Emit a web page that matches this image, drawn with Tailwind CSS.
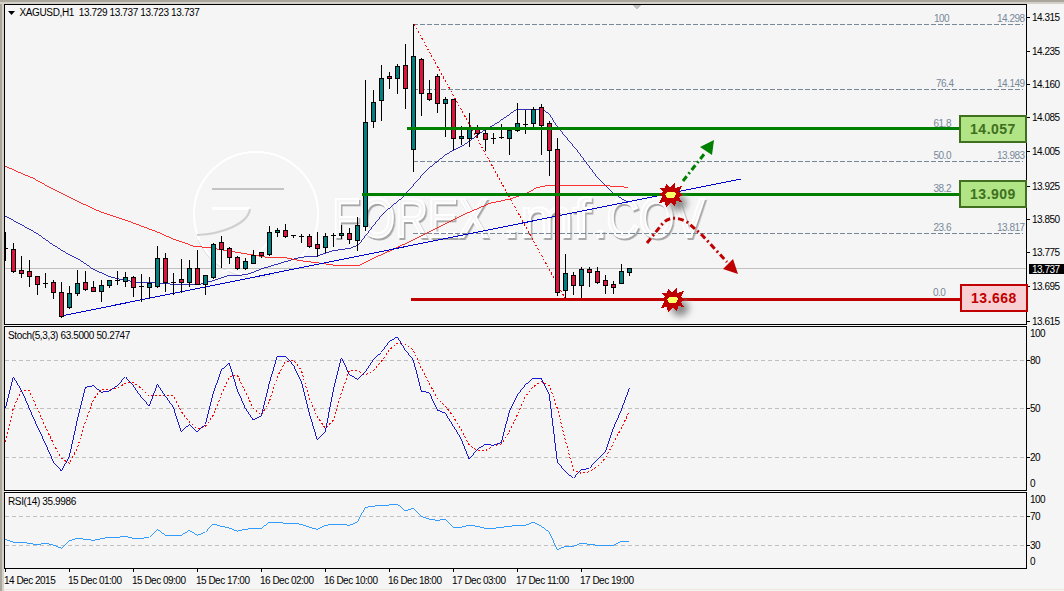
<!DOCTYPE html>
<html lang="en">

<head>
  <meta charset="UTF-8">
  <title>XAGUSD H1</title>
  <script src="https://cdn.jsdelivr.net/npm/@tailwindcss/browser@4"></script>
</head>

<body class="bg-[#f5f5f5]">
  <div class="w-[1064px] h-[591px] overflow-hidden flex flex-col font-['Liberation_Sans',sans-serif] text-[10px] tracking-[-0.5px] text-black">
    <div class="h-[4px] shrink-0 bg-[#d4d0c8] border-t-2 border-[#a9a69c]"></div>
    <div class="flex flex-1">
      <div class="w-[4px] shrink-0 bg-[#d4d0c8] border-l-2 border-[#a9a69c]"></div>
      <div class="flex-1 flex flex-col">

        <!-- main chart -->
        <div class="flex h-[321px]">
          <div class="relative w-[1023px] border border-black">
            <svg class="block w-[1021px] h-[319px]" viewBox="5 5 1021 319" shape-rendering="crispEdges">
              <defs>
                <filter id="blur" x="-50%" y="-50%" width="200%" height="200%">
                  <feGaussianBlur stdDeviation="3.5" />
                </filter>
                <filter id="emboss" x="-5%" y="-10%" width="110%" height="120%">
                  <feDropShadow dx="1.5" dy="2" stdDeviation="0.6" flood-color="#a8a8a8" />
                </filter>
                <g id="star">
                  <ellipse cx="7" cy="8" rx="9" ry="8" fill="#8c8c8c" filter="url(#blur)" />
                  <polygon fill="#c00000" points="-11,-7 -6,-7 -5,-11 -1,-8 4,-12 4,-7 11,-9 8,-3 12,0 8,2 11,7 5,6 4,12 0,8 -5,12 -6,7 -12,8 -9,2 -12,-1 -8,-3" />
                  <polygon fill="#ffff66" points="-6,-1 -3,-3 0,-3 3,-3 5,-1 4,1 2,3 -2,3 -4,3" />
                </g>
              </defs>

              <!-- watermark -->
              <g shape-rendering="geometricPrecision" font-family="Liberation Sans">
                <circle cx="256" cy="214" r="62" fill="none" stroke="#ffffff" stroke-width="2" />
                <path d="M198 240 A62 62 0 0 0 300 258" fill="none" stroke="#dedede" stroke-width="1" />
                <rect x="212" y="188" width="72" height="2" fill="#c4c4c4" />
                <rect x="212" y="207" width="38" height="3" fill="#ffffff" />
                <path d="M250 209 C248 224 222 234 197 235" fill="none" stroke="#cfcfcf" stroke-width="2" />
                <path d="M272 236 C262 254 240 268 222 272" fill="none" stroke="#ffffff" stroke-width="2" />
                <g fill="#f5f5f5" stroke="#ffffff" stroke-width="2" filter="url(#emboss)" font-size="56">
                  <text x="332" y="237" textLength="156" lengthAdjust="spacingAndGlyphs">FOREX</text>
                  <text x="502" y="237" textLength="88" lengthAdjust="spacingAndGlyphs">.mf</text>
                  <text x="594" y="237" textLength="110" lengthAdjust="spacingAndGlyphs">.COV</text>
                </g>
              </g>

              <!-- open price marker -->
              <polygon points="632,5 642,5 637,9" fill="#c0c0c0" />

              <!-- current price line -->
              <rect x="5" y="268" width="1021" height="1" fill="#c0c0c0" />

              <!-- fibo levels -->
              <g stroke="#778899" stroke-width="1" stroke-dasharray="5 2">
                <line x1="413" y1="24.5" x2="1023" y2="24.5" />
                <line x1="413" y1="89.5" x2="1023" y2="89.5" />
                <line x1="413" y1="161.5" x2="1023" y2="161.5" />
                <line x1="413" y1="233.5" x2="1023" y2="233.5" />
              </g>
              <line x1="414" y1="24" x2="565" y2="298" stroke="#ff0000" stroke-width="1" stroke-dasharray="2 2" />

              <polyline id="ma-blue" fill="none" stroke="#0000a0" stroke-width="0.8" />
              <polyline id="ma-red" fill="none" stroke="#ff0000" stroke-width="0.8" />
              <line x1="61" y1="316" x2="741" y2="179" stroke="#0000cd" stroke-width="1" />

              <g id="candles"></g>

              <!-- levels -->
              <rect x="407" y="127" width="553" height="3" fill="#008000" />
              <rect x="362" y="193" width="598" height="3" fill="#008000" />
              <rect x="411" y="298" width="550" height="3" fill="#c00000" />

              <!-- arrows -->
              <g shape-rendering="geometricPrecision">
                <line x1="683" y1="181" x2="705" y2="153" stroke="#008000" stroke-width="3" stroke-dasharray="6 3 2 3" />
                <polygon points="714,140 700,147 712,155" fill="#008000" />
                <path d="M647 243 L663 223 Q672 214 687 222 L702 235 L727 262" fill="none" stroke="#c00000" stroke-width="3" stroke-dasharray="6 3 2 3" />
                <polygon points="738,274 723,269 733,259" fill="#c00000" />
              </g>
              <use href="#star" x="671" y="195" />
              <use href="#star" x="673" y="300" />

              <!-- legend and fibo labels -->
              <g shape-rendering="geometricPrecision">
                <polygon points="8,11 15,11 11.5,15" fill="#000000" />
                <text class="tracking-[-0.37px]" x="19.5" y="16" fill="#000000" xml:space="preserve">XAGUSD,H1  13.729 13.737 13.723 13.737</text>
                <g fill="#778899">
                  <text x="934" y="22">100</text><text x="997" y="22">14.298</text>
                  <text x="936" y="87">76.4</text><text x="997" y="87">14.149</text>
                  <text x="933.5" y="127">61.8</text>
                  <text x="933.5" y="159">50.0</text><text x="997" y="159">13.983</text>
                  <text x="933.5" y="192">38.2</text>
                  <text x="933.5" y="231">23.6</text><text x="997" y="231">13.817</text>
                  <text x="933" y="296">0.0</text>
                </g>
              </g>
            </svg>

            <div class="absolute left-[954px] top-[110px] w-[68px] h-[28px] border-2 border-[#3f6f1f] bg-[#b0e484] flex items-center justify-center font-bold text-[14px] tracking-[0.5px] text-[#3f6f1f]">14.057</div>
            <div class="absolute left-[954px] top-[175px] w-[68px] h-[28px] border-2 border-[#3f6f1f] bg-[#b0e484] flex items-center justify-center font-bold text-[14px] tracking-[0.5px] text-[#3f6f1f]">13.909</div>
            <div class="absolute left-[955px] top-[279px] w-[68px] h-[28px] border-2 border-[#c00000] bg-[#f8cfd2] flex items-center justify-center font-bold text-[14px] tracking-[0.5px] text-[#c00000]">13.668</div>
          </div>
          <svg class="block w-[37px] h-[321px] overflow-visible" viewBox="1027 4 37 321">
            <g fill="#000000">
              <rect x="1027" y="17" width="3" height="1" /><text x="1032" y="20.5">14.315</text>
              <rect x="1027" y="51" width="3" height="1" /><text x="1032" y="55">14.235</text>
              <rect x="1027" y="84" width="3" height="1" /><text x="1032" y="87.5">14.160</text>
              <rect x="1027" y="117" width="3" height="1" /><text x="1032" y="120.5">14.085</text>
              <rect x="1027" y="151" width="3" height="1" /><text x="1032" y="155">14.005</text>
              <rect x="1027" y="186" width="3" height="1" /><text x="1032" y="189.5">13.925</text>
              <rect x="1027" y="219" width="3" height="1" /><text x="1032" y="223">13.850</text>
              <rect x="1027" y="252" width="3" height="1" /><text x="1032" y="256">13.775</text>
              <rect x="1027" y="286" width="3" height="1" /><text x="1032" y="289.5">13.695</text>
              <rect x="1027" y="321" width="3" height="1" /><text x="1032" y="325">13.615</text>
            </g>
            <rect x="1029" y="264" width="35" height="10" fill="#000000" />
            <text x="1032" y="272.5" fill="#ffffff">13.737</text>
          </svg>
        </div>

        <!-- stochastic -->
        <div class="flex h-[165px] mt-[1px]">
          <div class="w-[1023px] border border-black">
            <svg class="block w-[1021px] h-[163px]" viewBox="5 327 1021 163" shape-rendering="crispEdges">
              <g stroke="#c0c0c0" stroke-width="1" stroke-dasharray="4 3">
                <line x1="5" y1="360.5" x2="1026" y2="360.5" />
                <line x1="5" y1="408.5" x2="1026" y2="408.5" />
                <line x1="5" y1="457.5" x2="1026" y2="457.5" />
              </g>
              <polyline id="stoch-signal" fill="none" stroke="#ff0000" stroke-width="1" stroke-dasharray="2 2" />
              <polyline id="stoch-main" fill="none" stroke="#0000cd" stroke-width="0.9" />
              <text class="tracking-[-0.37px]" x="8" y="338.5" fill="#000000" shape-rendering="geometricPrecision">Stoch(5,3,3) 63.5000 50.2747</text>
            </svg>
          </div>
          <svg class="block w-[37px] h-[165px]" viewBox="1027 326 37 165">
            <g fill="#000000">
              <text x="1030" y="336.5">100</text>
              <rect x="1027" y="360" width="3" height="1" /><text x="1030" y="364">80</text>
              <rect x="1027" y="408" width="3" height="1" /><text x="1030" y="412">50</text>
              <rect x="1027" y="457" width="3" height="1" /><text x="1030" y="461">20</text>
              <text x="1030" y="486.5">0</text>
            </g>
          </svg>
        </div>

        <!-- rsi -->
        <div class="flex h-[77px] mt-[1px]">
          <div class="w-[1023px] border border-black">
            <svg class="block w-[1021px] h-[75px]" viewBox="5 493 1021 75" shape-rendering="crispEdges">
              <g stroke="#c0c0c0" stroke-width="1" stroke-dasharray="4 3">
                <line x1="5" y1="516.5" x2="1026" y2="516.5" />
                <line x1="5" y1="545.5" x2="1026" y2="545.5" />
              </g>
              <polyline id="rsi" fill="none" stroke="#1e90ff" stroke-width="0.9" />
              <text class="tracking-[-0.37px]" x="8" y="504.5" fill="#000000" shape-rendering="geometricPrecision">RSI(14) 35.9986</text>
            </svg>
          </div>
          <svg class="block w-[37px] h-[77px]" viewBox="1027 492 37 77">
            <g fill="#000000">
              <text x="1030" y="502.5">100</text>
              <rect x="1027" y="516" width="3" height="1" /><text x="1030" y="520">70</text>
              <rect x="1027" y="545" width="3" height="1" /><text x="1030" y="549">30</text>
              <text x="1030" y="565">0</text>
            </g>
          </svg>
        </div>

        <!-- time axis -->
        <div class="flex pl-[1px] h-[21px] border-b border-[#ece9d8]">
          <div class="w-[64px] shrink-0"><div class="w-px h-[3px] bg-black"></div><div class="mt-[1px] -ml-[1px] whitespace-nowrap">14 Dec 2015</div></div>
          <div class="w-[64px] shrink-0"><div class="w-px h-[3px] bg-black"></div><div class="mt-[1px] -ml-[1px] whitespace-nowrap">15 Dec 01:00</div></div>
          <div class="w-[64px] shrink-0"><div class="w-px h-[3px] bg-black"></div><div class="mt-[1px] -ml-[1px] whitespace-nowrap">15 Dec 09:00</div></div>
          <div class="w-[64px] shrink-0"><div class="w-px h-[3px] bg-black"></div><div class="mt-[1px] -ml-[1px] whitespace-nowrap">15 Dec 17:00</div></div>
          <div class="w-[64px] shrink-0"><div class="w-px h-[3px] bg-black"></div><div class="mt-[1px] -ml-[1px] whitespace-nowrap">16 Dec 02:00</div></div>
          <div class="w-[64px] shrink-0"><div class="w-px h-[3px] bg-black"></div><div class="mt-[1px] -ml-[1px] whitespace-nowrap">16 Dec 10:00</div></div>
          <div class="w-[64px] shrink-0"><div class="w-px h-[3px] bg-black"></div><div class="mt-[1px] -ml-[1px] whitespace-nowrap">16 Dec 18:00</div></div>
          <div class="w-[64px] shrink-0"><div class="w-px h-[3px] bg-black"></div><div class="mt-[1px] -ml-[1px] whitespace-nowrap">17 Dec 03:00</div></div>
          <div class="w-[64px] shrink-0"><div class="w-px h-[3px] bg-black"></div><div class="mt-[1px] -ml-[1px] whitespace-nowrap">17 Dec 11:00</div></div>
          <div class="w-[64px] shrink-0"><div class="w-px h-[3px] bg-black"></div><div class="mt-[1px] -ml-[1px] whitespace-nowrap">17 Dec 19:00</div></div>
        </div>
      </div>
    </div>
  </div>

  <script>
    // all numbers below were read off a 3x view: x0/y0 is the page offset, values get divided by 3
    var NS = 'http://www.w3.org/2000/svg';

    // [wick top, body top, body bottom, wick bottom, up?]  body top == bottom means doji
    var bars = [
      [697,745,745,780,0],[730,748,812,815,0],[768,810,818,830,0],[780,814,829,858,0],[828,829,851,882,0],[820,848,848,860,0],
      [840,847,877,893,0],[846,877,949,950,0],[858,880,920,925,1],[810,850,880,885,1],[812,847,866,870,0],[843,862,872,873,0],
      [840,856,872,903,1],[840,841,856,860,1],[812,840,840,852,0],[816,832,842,858,1],[828,832,860,888,0],[822,858,858,902,0],
      [832,850,862,895,1],[738,775,857,860,1],[758,775,845,872,0],[818,845,845,882,0],[778,838,845,875,0],[780,805,845,858,1],
      [750,805,851,852,0],[825,826,851,882,1],[728,733,830,833,1],[708,727,747,800,0],[740,745,772,790,0],[767,772,804,808,0],
      [775,784,804,806,1],[750,764,790,790,1],[756,757,764,770,0],[678,697,763,765,1],[684,691,697,708,1],[672,691,707,710,0],
      [705,706,706,712,0],[703,707,707,725,0],[702,709,737,740,0],[696,733,745,768,0],[698,709,742,755,1],[698,704,704,738,0],
      [675,700,706,714,1],[685,700,717,730,0]
    ];
    // rest of the bars, read with y as is (same 3x origin)
    bars = bars.concat([
      [650,676,720,750,1],[240,367,677,690,1],[270,307,364,380,1],[195,235,301,360,1],[216,229,235,264,0],[192,199,233,278,1],
      [132,196,265,323,0],[73,169,448,513,1],[175,176,280,345,0],[240,280,298,300,0],[222,229,310,335,0],[290,298,310,408,1],
      [298,298,413,447,0],[378,409,415,432,1],[340,380,413,438,1],[375,382,398,410,0],[390,398,416,450,0],[398,414,414,428,0],
      [372,410,410,415,0],[385,389,413,462,1],[310,370,390,392,1],[330,373,373,398,0],[320,326,370,380,1],[313,322,374,462,0],
      [363,370,451,525,0],[415,448,875,885,0],[762,820,871,890,1],[816,826,856,882,0],[800,808,856,893,1],[802,808,817,858,0],
      [802,814,847,850,0],[825,841,856,878,0],[843,853,862,878,0],[792,814,850,850,1],[805,805,817,824,1]
    ]);

    var g = document.getElementById('candles');
    function box(x, y, w, h, fill) {
      var r = document.createElementNS(NS, 'rect');
      r.setAttribute('x', x); r.setAttribute('y', y);
      r.setAttribute('width', w); r.setAttribute('height', h);
      r.setAttribute('fill', fill);
      g.appendChild(r);
    }
    bars.forEach(function (b, n) {
      var x = 5 + 8 * n;
      var hi = Math.round(b[0] / 3), top = Math.round(b[1] / 3), bot = Math.round(b[2] / 3), lo = Math.round(b[3] / 3);
      box(x, hi, 1, lo - hi + 1, '#000');
      if (bot - top < 2) {
        box(x - 2, top, 5, 1 + bot - top, '#000');
      } else {
        box(x - 2, top, 5, bot - top + 1, '#000');
        box(x - 1, top + 1, 3, bot - top - 1, b[4] ? '#008080' : '#dc143c');
      }
    });

    function line(id, groups) {
      var pts = [];
      groups.forEach(function (gr) {
        for (var i = 0; i < gr.d.length; i += 2) {
          pts.push((gr.x0 + gr.d[i] / 3).toFixed(1) + ',' + (gr.y0 + gr.d[i + 1] / 3).toFixed(1));
        }
      });
      document.getElementById(id).setAttribute('points', pts.join(' '));
    }

    line('ma-blue', [
      { x0: 0, y0: 0, d: [15,648,60,672,110,700,160,735,200,760,240,780,280,808,330,830,370,840,420,848,470,848,520,853,600,853,640,842,680,828,740,824,790,805,840,790,900,772,950,768,1000,752] },
      { x0: 350, y0: 0, d: [0,745,25,735,60,690,100,640,160,590,230,510,290,462,350,430,400,392,440,370,500,328,580,328,600,345,620,378,680,450,740,530,790,580,835,608] }
    ]);
    line('ma-red', [
      { x0: 0, y0: 0, d: [15,498,60,518,100,535,160,568,220,598,300,635,370,658,470,695,520,717,580,738,640,745,700,755,760,765,800,772,850,772,900,782,950,788,1000,795] },
      { x0: 350, y0: 0, d: [0,797,30,795,70,775,130,748,200,715,260,685,350,640,420,610,480,597,530,580,560,563,600,555,700,555,780,558,835,562] }
    ]);

    // oscillators have one reading per bar
    function series(ys) {
      var d = [];
      ys.forEach(function (y, n) { d.push(16 + 24 * n, y); });
      return [{ x0: 0, y0: 320, d: d }];
    }
    line('stoch-main', series([265,170,210,265,320,370,425,453,410,300,202,197,217,213,197,170,197,232,258,193,228,262,336,313,336,313,220,150,130,210,265,300,287,190,108,108,135,185,280,360,335,210,113,163,178,155,120,97,65,50,90,120,213,218,270,280,318,358,418,388,373,376,368,275,225,195,175,175,225,425,455,475,450,445,420,395,325,270,205]));
    line('stoch-signal', series([365,265,212,212,265,320,370,415,430,385,305,240,207,208,205,190,187,205,228,226,226,228,275,305,328,320,285,225,170,165,215,265,285,245,170,125,120,150,235,290,325,300,220,152,152,165,152,125,90,70,72,90,145,190,235,258,290,330,375,392,392,378,372,335,285,230,200,185,197,265,360,450,460,455,440,415,370,325,275]));
    line('rsi', series([658,667,667,670,674,670,675,685,663,655,658,661,656,652,652,649,655,655,652,628,646,646,646,631,646,637,612,619,624,634,628,625,625,607,607,610,610,613,622,628,616,613,613,616,607,562,559,555,555,552,573,565,589,597,601,598,622,622,616,619,625,625,622,619,616,616,607,619,637,689,679,679,670,673,676,676,676,664,664]));
  </script>
</body>

</html>
